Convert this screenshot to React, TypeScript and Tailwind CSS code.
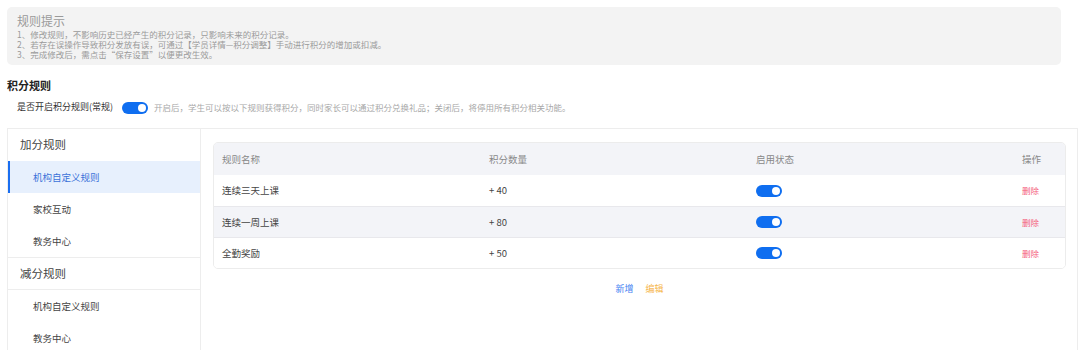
import { useState } from "react";

const font = { fontFamily: '"Noto Sans CJK SC", "Noto Sans", sans-serif' };

const Toggle = ({ on, onClick }: { on: boolean; onClick?: () => void }) => (
  <button
    onClick={onClick}
    className={`relative inline-flex h-[12px] w-[26px] shrink-0 items-center rounded-full transition-colors ${
      on ? "bg-[#0f6ef0]" : "bg-gray-300"
    }`}
  >
    <span
      className={`absolute top-[2px] h-[8px] w-[8px] rounded-full bg-white transition-all ${
        on ? "left-[16px]" : "left-[2px]"
      }`}
    />
  </button>
);

const rules = [
  { name: "连续三天上课", points: "+ 40" },
  { name: "连续一周上课", points: "+ 80" },
  { name: "全勤奖励", points: "+ 50" },
];

export default function App() {
  const [enabled, setEnabled] = useState(true);
  const [ruleOn, setRuleOn] = useState([true, true, true]);
  const [active, setActive] = useState("add-0");

  const menu = [
    { title: "加分规则", key: "add", items: ["机构自定义规则", "家校互动", "教务中心"] },
    { title: "减分规则", key: "sub", items: ["机构自定义规则", "教务中心"] },
  ];

  return (
    <div className="w-[1080px] h-[350px] overflow-hidden bg-white px-[7px] pt-[7px]" style={font}>
      {/* Tips */}
      <div className="h-[58px] w-[1054px] rounded-[5px] bg-[#f3f3f3] px-[10px] pt-[6px]">
        <div className="text-[12px] leading-[16px] text-[#9a9a9a]">规则提示</div>
        <div className="text-[8.5px] leading-[10px] text-[#9a9a9a]">
          <p>1、修改规则，不影响历史已经产生的积分记录，只影响未来的积分记录。</p>
          <p>2、若存在误操作导致积分发放有误，可通过【学员详情—积分调整】手动进行积分的增加或扣减。</p>
          <p>3、完成修改后，需点击“保存设置”以便更改生效。</p>
        </div>
      </div>

      <h2 className="mt-[12px] text-[11px] font-bold leading-[16px] text-[#222]">积分规则</h2>

      <div className="mt-[6px] flex h-[16px] items-center pl-[10px]">
        <span className="text-[9px] text-[#333]">是否开启积分规则(常规)</span>
        <span className="ml-[9px]">
          <Toggle on={enabled} onClick={() => setEnabled(!enabled)} />
        </span>
        <span className="ml-[6px] text-[8.5px] text-[#a8a8a8]">
          开启后，学生可以按以下规则获得积分，同时家长可以通过积分兑换礼品；关闭后，将停用所有积分相关功能。
        </span>
      </div>

      {/* Main panel */}
      <div className="mt-[13px] flex h-[240px] w-[1071px] border border-[#ededed]">
        <div className="w-[193px] shrink-0 border-r border-[#ededed]">
          {menu.map((group, gi) => (
            <div key={group.key} className={gi > 0 ? "border-t border-[#ededed]" : ""}>
              <div
                className={`flex h-[32px] items-center pl-[12px] text-[11.5px] text-[#444] ${
                  gi > 0 ? "border-b border-[#ededed]" : ""
                }`}
              >
                {group.title}
              </div>
              {group.items.map((item, i) => {
                const k = `${group.key}-${i}`;
                const isActive = active === k;
                return (
                  <div
                    key={k}
                    onClick={() => setActive(k)}
                    className={`flex h-[32px] cursor-pointer items-center text-[9.5px] ${
                      isActive
                        ? "border-l-2 border-[#1a6ef0] bg-[#e7f0fd] pl-[23px] text-[#3b72d9]"
                        : "pl-[25px] text-[#444]"
                    }`}
                  >
                    {item}
                  </div>
                );
              })}
            </div>
          ))}
        </div>

        <div className="flex-1 pl-[12px] pr-[11px] pt-[13px]">
          <div className="overflow-hidden rounded-[5px] border border-[#ececec] text-[9.5px]">
            <div className="grid h-[32px] grid-cols-[275px_267px_1fr_60px] items-center bg-[#f3f4f8] text-[#888]">
              <span className="pl-[8px]">规则名称</span>
              <span>积分数量</span>
              <span>启用状态</span>
              <span className="pl-[17px]">操作</span>
            </div>
            {rules.map((r, i) => (
              <div
                key={r.name}
                className={`grid h-[31px] grid-cols-[275px_267px_1fr_60px] items-center text-[#444] ${
                  i === 1 ? "bg-[#f3f4f8]" : "bg-white"
                } ${i > 0 ? "border-t border-[#e8e8ec]" : ""}`}
              >
                <span className="pl-[8px]">{r.name}</span>
                <span>{r.points}</span>
                <span className="flex">
                  <Toggle
                    on={ruleOn[i]}
                    onClick={() => setRuleOn(ruleOn.map((v, j) => (j === i ? !v : v)))}
                  />
                </span>
                <span className="pl-[17px] text-[8.5px] text-[#f4607a]">删除</span>
              </div>
            ))}
          </div>

          <div className="mt-[13px] flex justify-center gap-[12px] text-[9px]">
            <button className="text-[#4481f2]">新增</button>
            <button className="text-[#f6b54a]">编辑</button>
          </div>
        </div>
      </div>
    </div>
  );
}
